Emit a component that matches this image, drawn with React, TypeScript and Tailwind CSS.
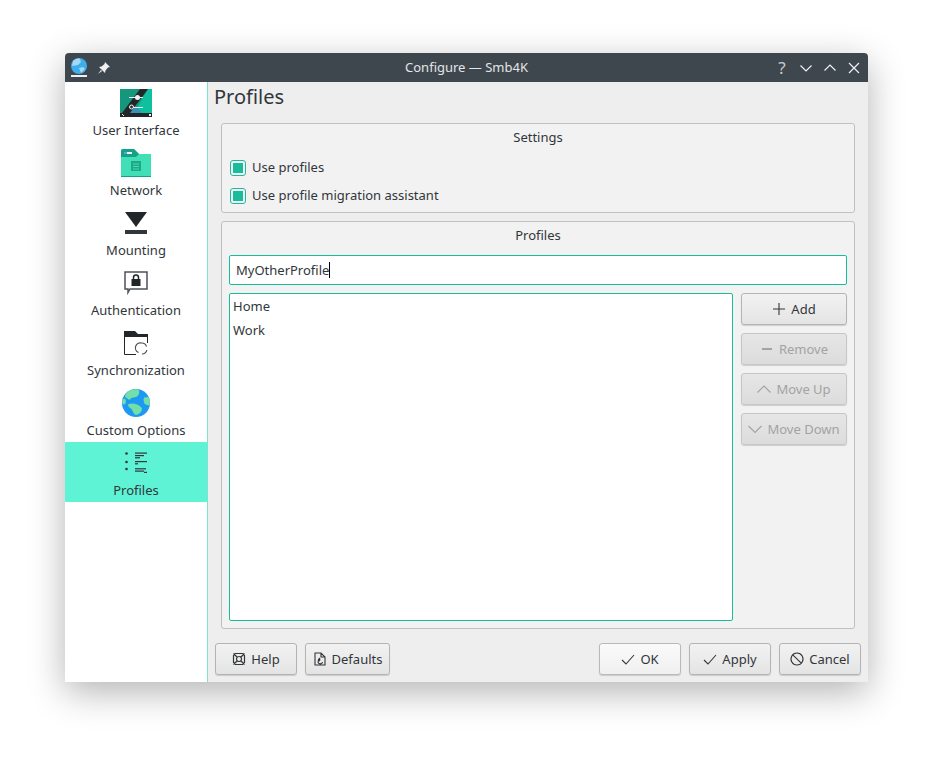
const textFont = "font-['Noto_Sans','Open_Sans',sans-serif]";

const UiIcon = () => (
	<svg width="32" height="28" viewBox="0 0 32 28">
		<rect width="32" height="28" fill="#14977d" />
		<polygon points="28,0 32,0 32,24 14,24" fill="#0fc0a0" />
		<polygon points="8,16 15,16 22,24 8,24" fill="#3d8fb5" />
		<polygon points="20,0 28,0 10,24 2,24" fill="#232629" />
		<rect y="24" width="32" height="4" fill="#232629" />
		<rect x="9" y="8" width="14" height="1" fill="#eff0f1" />
		<circle cx="17.500" cy="8.500" r="2.500" fill="#eff0f1" />
		<rect x="9" y="18" width="14" height="1" fill="#eff0f1" />
		<circle cx="11.500" cy="18" r="2" fill="#31363b" stroke="#eff0f1" />
		<rect x="29" y="25" width="2" height="2" fill="#eff0f1" />
		<path d="M2 25l2 2" stroke="#eff0f1" />
	</svg>
);

const FolderIcon = () => (
	<svg width="30" height="28" viewBox="0 0 30 28">
		<path d="M0 2a2 2 0 0 1 2-2h11l5 5h12v23H0z" fill="#40dfb5" />
		<path d="M0 2a2 2 0 0 1 2-2h11l5 5-3 3H0z" fill="#16a085" />
		<rect x="3" y="3" width="8" height="2" fill="#eff0f1" />
		<rect x="3" y="3" width="3" height="2" fill="#3daee9" />
		<rect y="27" width="30" height="1" fill="#16a085" />
		<rect x="10" y="12" width="10" height="10" fill="#1fa886" />
		<path d="M12 15h6M12 17.500h6M12 20h6" stroke="#40dfb5" />
	</svg>
);

const MountIcon = () => (
	<svg width="22" height="22" viewBox="0 0 22 22">
		<polygon points="0,0 22,0 11,15" fill="#232629" />
		<rect y="18" width="22" height="4" fill="#31363b" />
	</svg>
);

const AuthIcon = () => (
	<svg width="24" height="24" viewBox="0 0 24 24">
		<path d="M1 1h22v17H6l-2 3.500V18H1z" fill="none" stroke="#4d5257" strokeWidth="1.500" />
		<rect x="7.500" y="8" width="9" height="7" fill="#232629" />
		<path d="M9.500 8V6.500a2.500 2.500 0 0 1 5 0V8" fill="none" stroke="#232629" strokeWidth="1.500" />
	</svg>
);

const SyncIcon = () => (
	<svg width="24" height="24" viewBox="0 0 24 24">
		<path d="M0 0h11l3 3h10v3H0z" fill="#232629" />
		<path d="M.5 5v18.500H12M23.500 5v7" stroke="#232629" fill="none" />
		<path d="M14.500 21.500a5 5 0 0 1 3-9.500 5 5 0 0 1 5 3.500M22.800 19a5 5 0 0 1-4.800 4" stroke="#4d4d4d" strokeWidth="1.200" fill="none" />
	</svg>
);

const GlobeIcon = () => (
	<svg width="28" height="28" viewBox="0 0 28 28">
		<circle cx="14" cy="14" r="14" fill="#1d99f3" />
		<path d="M6 2.500C9 .5 13 0 16.500 .5C18 3 17 6 15 7.500C12 9 9 8 7.500 11L3 8C3 6 4.500 4 6 2.500z" fill="#71e0a6" />
		<path d="M6 15.500c3-1.500 6-1 9 0 3 1 5 3 5 5-1 3-3 5-6 5.500-3-1-3-5-5-6.500-2-1-3-2.500-3-4z" fill="#71e0a6" />
		<path d="M22 8.500c2-.5 4-.5 5 0 1 2.500 1 5 .5 7.500-2 .5-4.500 0-5.500-2.500-.5-2-.5-3.500 0-5z" fill="#71e0a6" />
		<path d="M.5 10.500l2.500-1 1 3-1 3-2.500-.5c-.3-1.500-.3-3 0-4.500z" fill="#71e0a6" />
	</svg>
);

const ListIcon = () => (
	<svg width="24" height="24" viewBox="0 0 24 24" fill="#31363b">
		<circle cx="2.500" cy="2.500" r="1.300" />
		<circle cx="2.500" cy="11" r="1.300" />
		<circle cx="2.500" cy="18" r="1.300" />
		<rect x="11" y="1.500" width="12" height="1.200" />
		<rect x="11" y="4" width="9" height="1.200" />
		<rect x="11" y="6.200" width="5" height="1.200" />
		<rect x="11" y="10" width="12" height="1.200" />
		<rect x="11" y="12.200" width="3" height="1.200" />
		<rect x="11" y="17.200" width="11" height="1.200" />
		<rect x="11" y="19.500" width="9" height="1.200" />
		<rect x="20" y="20.800" width="3" height="1.200" />
	</svg>
);

const navItems = [
	{ label: "User Interface", icon: <UiIcon /> },
	{ label: "Network", icon: <FolderIcon /> },
	{ label: "Mounting", icon: <MountIcon /> },
	{ label: "Authentication", icon: <AuthIcon /> },
	{ label: "Synchronization", icon: <SyncIcon /> },
	{ label: "Custom Options", icon: <GlobeIcon /> },
	{ label: "Profiles", icon: <ListIcon />, active: true },
];

const Glyph = ({ d, weight = 1.1 }: { d: string; weight?: number }) => (
	<svg width="16" height="16" viewBox="0 0 16 16" fill="none" stroke="currentColor" strokeWidth={weight}>
		<path d={d} />
	</svg>
);

const PLUS = "M8 2v12M2 8h12";
const MINUS = "M3 8h10";
const UP = "M1.500 11.500L8 5l6.500 6.500";
const DOWN = "M1.500 5L8 11.500 14.500 5";
const CHECK = "M2 9l4 4 8-9";
const HELP = "M4.500 2.500h7l2 2v7l-2 2h-7l-2-2v-7zM8 5.500a2.500 2.500 0 1 0 .01 0zM2.500 2.500l4 4M13.500 2.500l-4 4M2.500 13.500l4-4M13.500 13.500l-4-4";
const DEFAULTS = "M3 2h6l4 4v8H3zM9 2v4h4M10.500 11a2.200 2.200 0 1 1-2.200-2.500H7M8 7L6.500 8.500 8 10";
const CANCEL = "M8 2a6 6 0 1 0 .01 0zM3.800 3.800l8.400 8.400";

const Button = ({
	label,
	d,
	width,
	disabled,
	light,
	weight,
}: {
	label: string;
	d: string;
	width: string;
	disabled?: boolean;
	light?: boolean;
	weight?: number;
}) => (
	<div
		className={`${width} h-8 shrink-0 flex items-center justify-center gap-1 pr-px rounded-[3px] border text-[13px] shadow-[0_1px_1px_rgba(0,0,0,0.15)] ${
			disabled
				? "border-[#c6c6c6] bg-gradient-to-b from-[#e6e6e6] to-[#dcdcdc] text-[#a1a3a5]"
				: light
					? "border-[#b9b9b9] bg-gradient-to-b from-[#fafafa] to-[#f0f0f0] text-[#31363b]"
					: "border-[#b4b4b4] bg-gradient-to-b from-[#f2f2f2] to-[#e4e4e4] text-[#31363b]"
		}`}
	>
		<Glyph d={d} weight={weight} />
		<span className="pt-[2px]">{label}</span>
	</div>
);

const CheckRow = ({ label }: { label: string }) => (
	<div className="h-7 flex items-center gap-[6px]">
		<div className="w-4 h-4 flex items-center justify-center rounded-[3px] border border-[#1abc9c] bg-[#f4f4f4]">
			<div className="w-[10px] h-[10px] bg-[#1abc9c]" />
		</div>
		<span>{label}</span>
	</div>
);

export default function App() {
	return (
		<div className={`w-[933px] h-[759px] bg-white pt-[53px] pl-[65px] text-[13px] text-[#31363b] ${textFont}`}>
			<div className="w-[803px] h-[629px] flex flex-col rounded-t-[4px] overflow-hidden shadow-[0_10px_36px_rgba(0,0,0,0.3)]">
				<div className="h-[29px] shrink-0 bg-[#3f474e] flex items-center pl-[5px] pr-[6px] text-[#e3e5e6]">
					<div className="w-[89px] flex items-center">
						<svg width="18" height="20" viewBox="0 0 18 20">
							<circle cx="9" cy="8" r="8" fill="#3daee9" />
							<path d="M3 3c2-2 5-3 7-2l1 3-3 3-6 1z" fill="#a5d8f3" />
							<path d="M9 10l4-1 2 2-4 4z" fill="#a5d8f3" />
							<rect x="1" y="17" width="16" height="2" fill="#eff0f1" />
						</svg>
						<svg className="ml-[9px]" width="14" height="14" viewBox="0 0 14 14" fill="#eff0f1">
							<path d="M8 1l5 5-2 .5-2.500 3L8 12 2 6l2.500-.5 3-2.500z" />
							<path d="M4 9l-3 4 4-3z" />
						</svg>
					</div>
					<div className="flex-1 text-center text-[13px]">Configure — Smb4K</div>
					<div className="w-[88px] flex items-center justify-end gap-[8px]">
						<span className="w-4 text-center text-[17px] leading-none text-[#c8cbcd]">?</span>
						<svg width="16" height="16" viewBox="0 0 16 16" fill="none" stroke="#eff0f1" strokeWidth="1.200">
							<path d="M2.500 5.500L8 11l5.500-5.500" />
						</svg>
						<svg width="16" height="16" viewBox="0 0 16 16" fill="none" stroke="#eff0f1" strokeWidth="1.200">
							<path d="M2.500 10.500L8 5l5.500 5.500" />
						</svg>
						<svg width="16" height="16" viewBox="0 0 16 16" fill="none" stroke="#eff0f1" strokeWidth="1.200">
							<path d="M3 3l10 10M13 3L3 13" />
						</svg>
					</div>
				</div>
				<div className="flex-1 flex min-h-0">
					<div className="w-[143px] shrink-0 bg-white border-r border-[#7fe3cd]">
						{navItems.map((item) => (
							<div
								key={item.label}
								className={`h-[60px] flex flex-col items-center ${item.active ? "bg-[#5ff3d6]" : ""}`}
							>
								<div className="h-[38px] pt-1 flex items-center justify-center">{item.icon}</div>
								<div className="leading-[20px]">{item.label}</div>
							</div>
						))}
					</div>
					<div className="flex-1 min-w-0 bg-[#eeeeee] pl-[6px] pr-[7px] flex flex-col">
						<div className="h-[30px] text-[20px] leading-[29px]">Profiles</div>
						<div className="mt-[11px] ml-[7px] mr-[6px] h-[90px] shrink-0 rounded-[3px] border border-[#c0c0c0] bg-[#f2f2f2] px-2">
							<div className="text-center leading-[26px]">Settings</div>
							<div className="mt-[4px]">
								<CheckRow label="Use profiles" />
								<CheckRow label="Use profile migration assistant" />
							</div>
						</div>
						<div className="mt-2 ml-[7px] mr-[6px] h-[408px] shrink-0 rounded-[3px] border border-[#c0c0c0] bg-[#f2f2f2] px-[7px] flex flex-col">
							<div className="text-center leading-[26px]">Profiles</div>
							<div className="mt-[7px] h-[30px] shrink-0 rounded-[2px] border border-[#1abc9c] bg-white px-[6px] flex items-center">
								<span className="pt-[2px]">MyOtherProfile</span>
								<span className="w-px h-4 bg-black" />
							</div>
							<div className="mt-2 flex gap-2 flex-1 min-h-0 mb-[7px]">
								<div className="flex-1 rounded-[2px] border border-[#1abc9c] bg-white px-[3px]">
									<div className="h-6 leading-6">Home</div>
									<div className="h-6 leading-6">Work</div>
								</div>
								<div className="w-[106px] flex flex-col gap-2">
									<Button label="Add" d={PLUS} width="w-full" />
									<Button label="Remove" d={MINUS} width="w-full" disabled weight={2} />
									<Button label="Move Up" d={UP} width="w-full" disabled />
									<Button label="Move Down" d={DOWN} width="w-full" disabled />
								</div>
							</div>
						</div>
						<div className="mt-[14px] flex gap-2 pl-px">
							<Button label="Help" d={HELP} width="w-[82px]" weight={1.2} />
							<Button label="Defaults" d={DEFAULTS} width="w-[85px]" />
							<div className="flex-1" />
							<Button label="OK" d={CHECK} width="w-[82px]" light />
							<Button label="Apply" d={CHECK} width="w-[82px]" />
							<Button label="Cancel" d={CANCEL} width="w-[82px]" />
						</div>
					</div>
				</div>
			</div>
		</div>
	);
}
